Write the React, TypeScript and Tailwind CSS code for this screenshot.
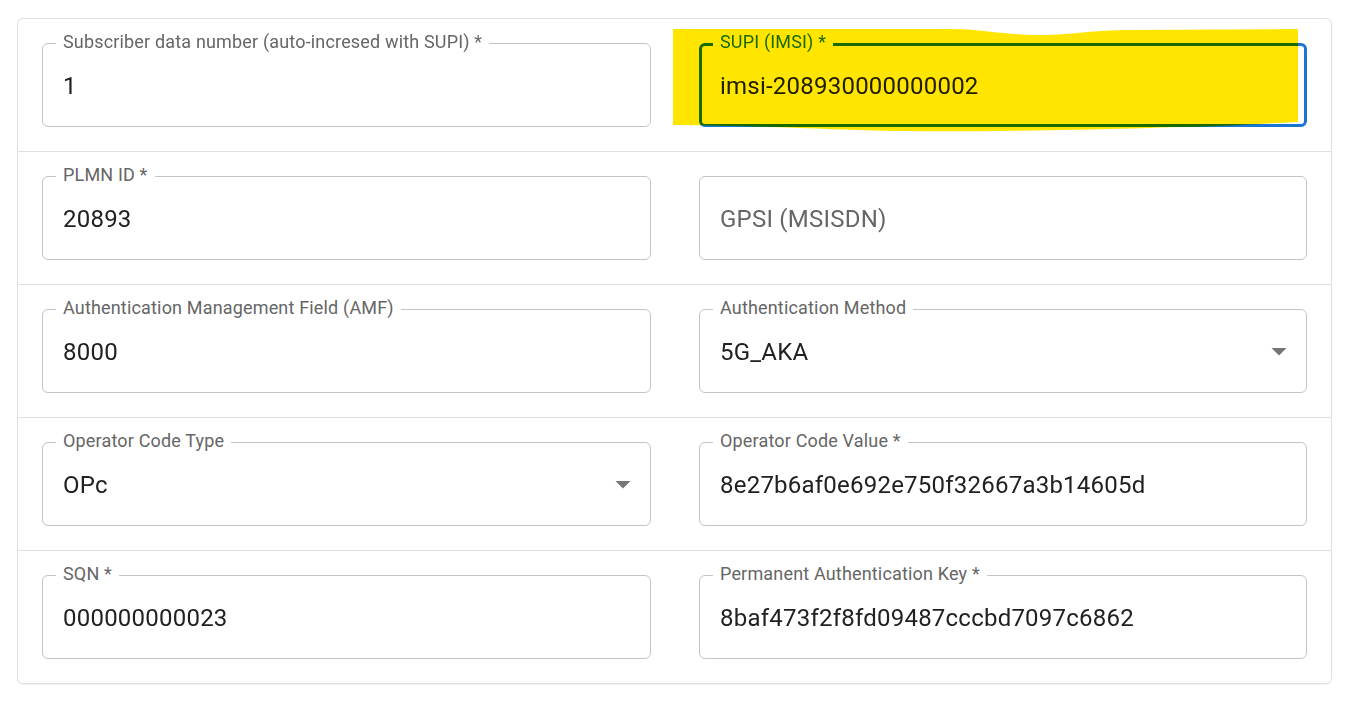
import React from "react";

type Field = {
  label: string;
  value?: string;
  placeholder?: string;
  select?: boolean;
  focused?: boolean;
  highlight?: boolean;
};

const rows: Field[][] = [
  [
    { label: "Subscriber data number (auto-incresed with SUPI) *", value: "1" },
    { label: "SUPI (IMSI) *", value: "imsi-208930000000002", focused: true, highlight: true },
  ],
  [
    { label: "PLMN ID *", value: "20893" },
    { label: "", placeholder: "GPSI (MSISDN)" },
  ],
  [
    { label: "Authentication Management Field (AMF)", value: "8000" },
    { label: "Authentication Method", value: "5G_AKA", select: true },
  ],
  [
    { label: "Operator Code Type", value: "OPc", select: true },
    { label: "Operator Code Value *", value: "8e27b6af0e692e750f32667a3b14605d" },
  ],
  [
    { label: "SQN *", value: "000000000023" },
    { label: "Permanent Authentication Key *", value: "8baf473f2f8fd09487cccbd7097c6862" },
  ],
];

// yellow marker stroke drawn over the focused field
const Highlight = () => (
  <svg
    className="absolute -left-[27px] -top-[15px] mix-blend-multiply pointer-events-none"
    width="628"
    height="106"
    viewBox="0 0 628 106"
  >
    <path
      d="M1 1 L278 1 C310 1 330 7 368 7 C400 7 420 2 458 2 L626 1 L626 94 C580 96 540 99 508 99 C420 102 300 104 228 103 C160 102 100 98 1 97 Z"
      fill="#ffe500"
    />
  </svg>
);

const TextField = ({ f }: { f: Field }) => (
  <div className="relative h-[84px]">
    <div
      className={
        f.focused
          ? "h-full rounded-[6px] border-[3px] border-[#1976d2] flex items-center pl-[18px] pr-[18px] pt-[2px]"
          : "h-full rounded-[6px] border border-[#c4c4c4] flex items-center pl-[20px] pr-[20px] pt-[2px]"
      }
    >
      {f.value ? (
        <span className="text-[24px] text-[#212121] leading-none tracking-[0.00938em]">{f.value}</span>
      ) : (
        <span className="text-[24px] text-[#666666] leading-none tracking-[0.00938em]">{f.placeholder}</span>
      )}
      {f.select && (
        <svg className="absolute right-[10px] top-[24px]" width="36" height="36" viewBox="0 0 24 24">
          <path d="M7 10l5 5 5-5z" fill="#757575" />
        </svg>
      )}
    </div>
    {f.label && (
      <span
        className={
          "absolute left-[14px] -top-[12px] px-[7px] bg-white text-[18px] leading-[22px] tracking-[0.00938em] " +
          (f.focused ? "text-[#1976d2]" : "text-[#666666]")
        }
      >
        {f.label}
      </span>
    )}
    {f.highlight && <Highlight />}
  </div>
);

export default function App() {
  return (
    <div className="min-h-screen bg-white pt-[18px] pl-[17px] font-['Roboto',sans-serif]">
      <div className="w-[1315px] rounded-[6px] border border-[#e0e0e0] shadow-[0_1px_1px_rgba(0,0,0,0.06)]">
        {rows.map((row, i) => (
          <div
            key={i}
            className={
              "grid grid-cols-[609px_608px] gap-[48px] px-[24px] py-[24px] " +
              (i < rows.length - 1 ? "border-b border-[#e0e0e0]" : "")
            }
          >
            {row.map((f, j) => (
              <TextField key={j} f={f} />
            ))}
          </div>
        ))}
      </div>
    </div>
  );
}
